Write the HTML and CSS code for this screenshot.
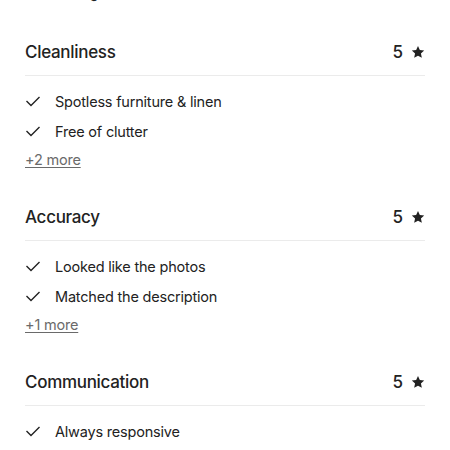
FILE: index.html
```html
<!DOCTYPE html>
<html>
<head>
<meta charset="utf-8">
<link rel="stylesheet" href="styles.css">
</head>
<body>
<div class="page">
  <div class="prev">
    <div class="item"><svg class="check" viewBox="0 0 16 16"><polyline points="1.5,8 6,12.5 14.5,4"/></svg><span>Thoughtful amenities</span></div>
  </div>

  <section class="cat">
    <div class="head"><h2>Cleanliness</h2><div class="rating">5 <svg class="star" viewBox="0 0 32 32"><path d="M16 2.5l4.2 9.1 9.9 1.1-7.4 6.8 2.1 9.8L16 24.3l-8.8 5 2.1-9.8-7.4-6.8 9.9-1.1z"/></svg></div></div>
    <div class="list">
      <div class="item"><svg class="check" viewBox="0 0 16 16"><polyline points="1.5,8 6,12.5 14.5,4"/></svg><span>Spotless furniture &amp; linen</span></div>
      <div class="item"><svg class="check" viewBox="0 0 16 16"><polyline points="1.5,8 6,12.5 14.5,4"/></svg><span>Free of clutter</span></div>
      <a class="more">+2 more</a>
    </div>
  </section>

  <section class="cat">
    <div class="head"><h2>Accuracy</h2><div class="rating">5 <svg class="star" viewBox="0 0 32 32"><path d="M16 2.5l4.2 9.1 9.9 1.1-7.4 6.8 2.1 9.8L16 24.3l-8.8 5 2.1-9.8-7.4-6.8 9.9-1.1z"/></svg></div></div>
    <div class="list">
      <div class="item"><svg class="check" viewBox="0 0 16 16"><polyline points="1.5,8 6,12.5 14.5,4"/></svg><span>Looked like the photos</span></div>
      <div class="item"><svg class="check" viewBox="0 0 16 16"><polyline points="1.5,8 6,12.5 14.5,4"/></svg><span>Matched the description</span></div>
      <a class="more">+1 more</a>
    </div>
  </section>

  <section class="cat">
    <div class="head"><h2>Communication</h2><div class="rating">5 <svg class="star" viewBox="0 0 32 32"><path d="M16 2.5l4.2 9.1 9.9 1.1-7.4 6.8 2.1 9.8L16 24.3l-8.8 5 2.1-9.8-7.4-6.8 9.9-1.1z"/></svg></div></div>
    <div class="list">
      <div class="item"><svg class="check" viewBox="0 0 16 16"><polyline points="1.5,8 6,12.5 14.5,4"/></svg><span>Always responsive</span></div>
    </div>
  </section>
</div>
</body>
</html>
```

FILE: styles.css
```css
html, body {
  margin: 0;
  padding: 0;
  background: #ffffff;
  overflow: hidden;
}
body {
  font-family: "Inter", "Noto Sans", sans-serif;
  color: #222222;
}
.page {
  padding: 0 25px;
  height: 450px;
  overflow: hidden;
}
.prev {
  margin-top: -23px;
  height: 31px;
}
.cat {
  margin-top: 33px;
}
.head {
  display: flex;
  justify-content: space-between;
  align-items: center;
  height: 22px;
  padding-bottom: 12px;
  border-bottom: 1px solid #ebebeb;
}
.head h2 {
  margin: 0;
  font-size: 17px;
  font-weight: 500;
  line-height: 22px;
  letter-spacing: -0.3px;
}
.rating {
  display: flex;
  align-items: center;
  gap: 8px;
  font-size: 17px;
  font-weight: 500;
}
.star {
  width: 14px;
  height: 14px;
  fill: #222222;
}
.list {
  margin-top: 10px;
  display: flex;
  flex-direction: column;
}
.item {
  display: flex;
  align-items: center;
  height: 30px;
  font-size: 14.5px;
  letter-spacing: -0.2px;
  gap: 14px;
}
.check {
  width: 16px;
  height: 16px;
  fill: none;
  stroke: #222222;
  stroke-width: 1.4;
}
.more {
  display: block;
  margin-top: 1px;
  height: 26px;
  line-height: 26px;
  font-size: 14.5px;
  letter-spacing: -0.2px;
  color: #6a6a6a;
  text-decoration: underline;
  text-underline-offset: 2px;
}
```
